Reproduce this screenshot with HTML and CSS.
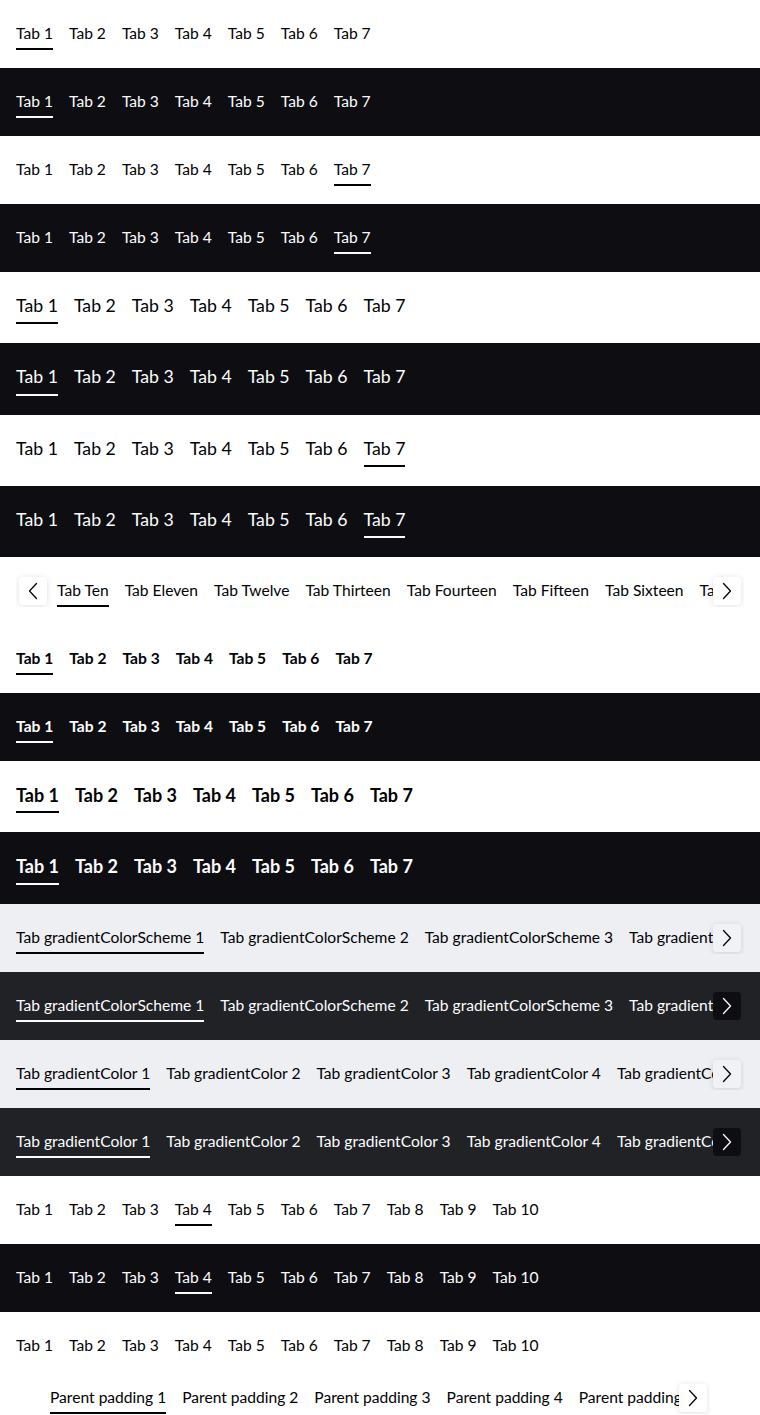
FILE: index.html
```
<!DOCTYPE html>
<html lang="en">
<head>
<meta charset="utf-8">
<title>Tabs Bar</title>
<link rel="stylesheet" href="styles.css">
</head>
<body>

<section class="row row--light">
  <div class="tabs"><div class="tabs__list">
    <button class="tab tab--active">Tab 1</button><button class="tab">Tab 2</button><button class="tab">Tab 3</button><button class="tab">Tab 4</button><button class="tab">Tab 5</button><button class="tab">Tab 6</button><button class="tab">Tab 7</button>
  </div></div>
</section>
<section class="row row--dark">
  <div class="tabs"><div class="tabs__list">
    <button class="tab tab--active">Tab 1</button><button class="tab">Tab 2</button><button class="tab">Tab 3</button><button class="tab">Tab 4</button><button class="tab">Tab 5</button><button class="tab">Tab 6</button><button class="tab">Tab 7</button>
  </div></div>
</section>
<section class="row row--light">
  <div class="tabs"><div class="tabs__list">
    <button class="tab">Tab 1</button><button class="tab">Tab 2</button><button class="tab">Tab 3</button><button class="tab">Tab 4</button><button class="tab">Tab 5</button><button class="tab">Tab 6</button><button class="tab tab--active">Tab 7</button>
  </div></div>
</section>
<section class="row row--dark">
  <div class="tabs"><div class="tabs__list">
    <button class="tab">Tab 1</button><button class="tab">Tab 2</button><button class="tab">Tab 3</button><button class="tab">Tab 4</button><button class="tab">Tab 5</button><button class="tab">Tab 6</button><button class="tab tab--active">Tab 7</button>
  </div></div>
</section>

<section class="row row--light row--medium">
  <div class="tabs tabs--medium"><div class="tabs__list">
    <button class="tab tab--active">Tab 1</button><button class="tab">Tab 2</button><button class="tab">Tab 3</button><button class="tab">Tab 4</button><button class="tab">Tab 5</button><button class="tab">Tab 6</button><button class="tab">Tab 7</button>
  </div></div>
</section>
<section class="row row--dark row--medium">
  <div class="tabs tabs--medium"><div class="tabs__list">
    <button class="tab tab--active">Tab 1</button><button class="tab">Tab 2</button><button class="tab">Tab 3</button><button class="tab">Tab 4</button><button class="tab">Tab 5</button><button class="tab">Tab 6</button><button class="tab">Tab 7</button>
  </div></div>
</section>
<section class="row row--light row--medium">
  <div class="tabs tabs--medium"><div class="tabs__list">
    <button class="tab">Tab 1</button><button class="tab">Tab 2</button><button class="tab">Tab 3</button><button class="tab">Tab 4</button><button class="tab">Tab 5</button><button class="tab">Tab 6</button><button class="tab tab--active">Tab 7</button>
  </div></div>
</section>
<section class="row row--dark row--medium">
  <div class="tabs tabs--medium"><div class="tabs__list">
    <button class="tab">Tab 1</button><button class="tab">Tab 2</button><button class="tab">Tab 3</button><button class="tab">Tab 4</button><button class="tab">Tab 5</button><button class="tab">Tab 6</button><button class="tab tab--active">Tab 7</button>
  </div></div>
</section>

<section class="row row--light">
  <div class="tabs">
    <div class="tabs__list tabs__list--scrolled">
      <button class="tab tab--active">Tab Ten</button><button class="tab">Tab Eleven</button><button class="tab">Tab Twelve</button><button class="tab">Tab Thirteen</button><button class="tab">Tab Fourteen</button><button class="tab">Tab Fifteen</button><button class="tab">Tab Sixteen</button><button class="tab">Tab Seventeen</button><button class="tab">Tab Eighteen</button>
    </div>
    <div class="tabs__ctrl tabs__ctrl--prev"><span class="scroll-btn"><svg viewBox="0 0 24 24" width="24" height="24"><polyline points="15.5,4.5 8.5,12 15.5,19.5"/></svg></span></div>
    <div class="tabs__ctrl tabs__ctrl--next"><span class="scroll-btn"><svg viewBox="0 0 24 24" width="24" height="24"><polyline points="8.5,4.5 15.5,12 8.5,19.5"/></svg></span></div>
  </div>
</section>

<section class="row row--light">
  <div class="tabs tabs--bold"><div class="tabs__list">
    <button class="tab tab--active">Tab 1</button><button class="tab">Tab 2</button><button class="tab">Tab 3</button><button class="tab">Tab 4</button><button class="tab">Tab 5</button><button class="tab">Tab 6</button><button class="tab">Tab 7</button>
  </div></div>
</section>
<section class="row row--dark">
  <div class="tabs tabs--bold"><div class="tabs__list">
    <button class="tab tab--active">Tab 1</button><button class="tab">Tab 2</button><button class="tab">Tab 3</button><button class="tab">Tab 4</button><button class="tab">Tab 5</button><button class="tab">Tab 6</button><button class="tab">Tab 7</button>
  </div></div>
</section>
<section class="row row--light row--medium">
  <div class="tabs tabs--medium tabs--bold"><div class="tabs__list">
    <button class="tab tab--active">Tab 1</button><button class="tab">Tab 2</button><button class="tab">Tab 3</button><button class="tab">Tab 4</button><button class="tab">Tab 5</button><button class="tab">Tab 6</button><button class="tab">Tab 7</button>
  </div></div>
</section>
<section class="row row--dark row--medium">
  <div class="tabs tabs--medium tabs--bold"><div class="tabs__list">
    <button class="tab tab--active">Tab 1</button><button class="tab">Tab 2</button><button class="tab">Tab 3</button><button class="tab">Tab 4</button><button class="tab">Tab 5</button><button class="tab">Tab 6</button><button class="tab">Tab 7</button>
  </div></div>
</section>

<section class="row row--surface-light">
  <div class="tabs">
    <div class="tabs__list">
      <button class="tab tab--active">Tab gradientColorScheme 1</button><button class="tab">Tab gradientColorScheme 2</button><button class="tab">Tab gradientColorScheme 3</button><button class="tab">Tab gradientColorScheme 4</button><button class="tab">Tab gradientColorScheme 5</button>
    </div>
    <div class="tabs__ctrl tabs__ctrl--next"><span class="scroll-btn"><svg viewBox="0 0 24 24" width="24" height="24"><polyline points="8.5,4.5 15.5,12 8.5,19.5"/></svg></span></div>
  </div>
</section>
<section class="row row--surface-dark">
  <div class="tabs">
    <div class="tabs__list">
      <button class="tab tab--active">Tab gradientColorScheme 1</button><button class="tab">Tab gradientColorScheme 2</button><button class="tab">Tab gradientColorScheme 3</button><button class="tab">Tab gradientColorScheme 4</button><button class="tab">Tab gradientColorScheme 5</button>
    </div>
    <div class="tabs__ctrl tabs__ctrl--next"><span class="scroll-btn"><svg viewBox="0 0 24 24" width="24" height="24"><polyline points="8.5,4.5 15.5,12 8.5,19.5"/></svg></span></div>
  </div>
</section>
<section class="row row--surface-light">
  <div class="tabs">
    <div class="tabs__list">
      <button class="tab tab--active">Tab gradientColor 1</button><button class="tab">Tab gradientColor 2</button><button class="tab">Tab gradientColor 3</button><button class="tab">Tab gradientColor 4</button><button class="tab">Tab gradientColor 5</button><button class="tab">Tab gradientColor 6</button>
    </div>
    <div class="tabs__ctrl tabs__ctrl--next"><span class="scroll-btn"><svg viewBox="0 0 24 24" width="24" height="24"><polyline points="8.5,4.5 15.5,12 8.5,19.5"/></svg></span></div>
  </div>
</section>
<section class="row row--surface-dark">
  <div class="tabs">
    <div class="tabs__list">
      <button class="tab tab--active">Tab gradientColor 1</button><button class="tab">Tab gradientColor 2</button><button class="tab">Tab gradientColor 3</button><button class="tab">Tab gradientColor 4</button><button class="tab">Tab gradientColor 5</button><button class="tab">Tab gradientColor 6</button>
    </div>
    <div class="tabs__ctrl tabs__ctrl--next"><span class="scroll-btn"><svg viewBox="0 0 24 24" width="24" height="24"><polyline points="8.5,4.5 15.5,12 8.5,19.5"/></svg></span></div>
  </div>
</section>

<section class="row row--light">
  <div class="tabs"><div class="tabs__list">
    <button class="tab">Tab 1</button><button class="tab">Tab 2</button><button class="tab">Tab 3</button><button class="tab tab--active">Tab 4</button><button class="tab">Tab 5</button><button class="tab">Tab 6</button><button class="tab">Tab 7</button><button class="tab">Tab 8</button><button class="tab">Tab 9</button><button class="tab">Tab 10</button>
  </div></div>
</section>
<section class="row row--dark">
  <div class="tabs"><div class="tabs__list">
    <button class="tab">Tab 1</button><button class="tab">Tab 2</button><button class="tab">Tab 3</button><button class="tab tab--active">Tab 4</button><button class="tab">Tab 5</button><button class="tab">Tab 6</button><button class="tab">Tab 7</button><button class="tab">Tab 8</button><button class="tab">Tab 9</button><button class="tab">Tab 10</button>
  </div></div>
</section>
<section class="row row--light">
  <div class="tabs"><div class="tabs__list">
    <button class="tab">Tab 1</button><button class="tab">Tab 2</button><button class="tab">Tab 3</button><button class="tab">Tab 4</button><button class="tab">Tab 5</button><button class="tab">Tab 6</button><button class="tab">Tab 7</button><button class="tab">Tab 8</button><button class="tab">Tab 9</button><button class="tab">Tab 10</button>
  </div></div>
</section>

<section class="row row--light row--parent-padding">
  <div class="tabs">
    <div class="tabs__list">
      <button class="tab tab--active">Parent padding 1</button><button class="tab">Parent padding 2</button><button class="tab">Parent padding 3</button><button class="tab">Parent padding 4</button><button class="tab">Parent padding 5</button><button class="tab">Parent padding 6</button>
    </div>
    <div class="tabs__ctrl tabs__ctrl--next"><span class="scroll-btn"><svg viewBox="0 0 24 24" width="24" height="24"><polyline points="8.5,4.5 15.5,12 8.5,19.5"/></svg></span></div>
  </div>
</section>

</body>
</html>
```
FILE: styles.css
```
* { box-sizing: border-box; }

html, body {
  margin: 0;
  padding: 0;
  background: #ffffff;
}

body {
  font-family: "Lato", "Liberation Sans", sans-serif;
  font-size: 15.6px;
  -webkit-font-smoothing: antialiased;
}

/* rows / themes */
.row {
  padding: 16px 16px 18px;
  --bg: #ffffff;
  --btn-bg: #ffffff;
  --btn-shadow: 0 1px 6px rgba(0, 0, 0, 0.13);
  background: var(--bg);
  color: #010205;
}
.row--medium { padding-bottom: 19px; }
.row--parent-padding { padding: 0 50px; }

.row--dark {
  --bg: #0e0e12;
  --btn-bg: #0e0e12;
  --btn-shadow: none;
  color: #fbfcff;
}
.row--surface-light {
  --bg: #eeeff2;
  --btn-bg: #f1f2f5;
  color: #010205;
}
.row--surface-dark {
  --bg: #212225;
  --btn-bg: #0e0e12;
  --btn-shadow: none;
  color: #fbfcff;
}

/* tabs bar */
.tabs {
  position: relative;
  overflow: hidden;
}
.tabs__list {
  display: flex;
  gap: 16px;
  white-space: nowrap;
}
.tabs__list--scrolled { padding-left: 41px; }

.tab {
  flex: none;
  position: relative;
  margin: 0;
  padding: 5px 0;
  border: 0;
  background: none;
  color: inherit;
  font: inherit;
  font-size: 15.6px;
  font-weight: 400;
  line-height: 24px;
  cursor: pointer;
}
.tabs--medium .tab {
  font-size: 17.7px;
  line-height: 26.25px;
}
.tabs--bold .tab { font-weight: 700; }
.tabs--medium.tabs--bold .tab { font-size: 18px; }

.tab--active::after {
  content: "";
  position: absolute;
  left: 0;
  right: 0;
  bottom: 0;
  height: 2px;
  background: currentColor;
}

/* scroll controls */
.tabs__ctrl {
  position: absolute;
  top: 0;
  bottom: 0;
  width: 31px;
  padding-top: 2px;
  display: flex;
  align-items: center;
  background: var(--bg);
}
.tabs__ctrl--prev { left: 0; justify-content: flex-end; }
.tabs__ctrl--next { right: 0; justify-content: flex-start; }

.scroll-btn {
  width: 28px;
  height: 28px;
  border-radius: 4px;
  background: var(--btn-bg);
  box-shadow: var(--btn-shadow);
  display: flex;
  align-items: center;
  justify-content: center;
}
.scroll-btn svg {
  display: block;
  fill: none;
  stroke: currentColor;
  stroke-width: 1.3;
  stroke-linecap: round;
  stroke-linejoin: round;
}
```
